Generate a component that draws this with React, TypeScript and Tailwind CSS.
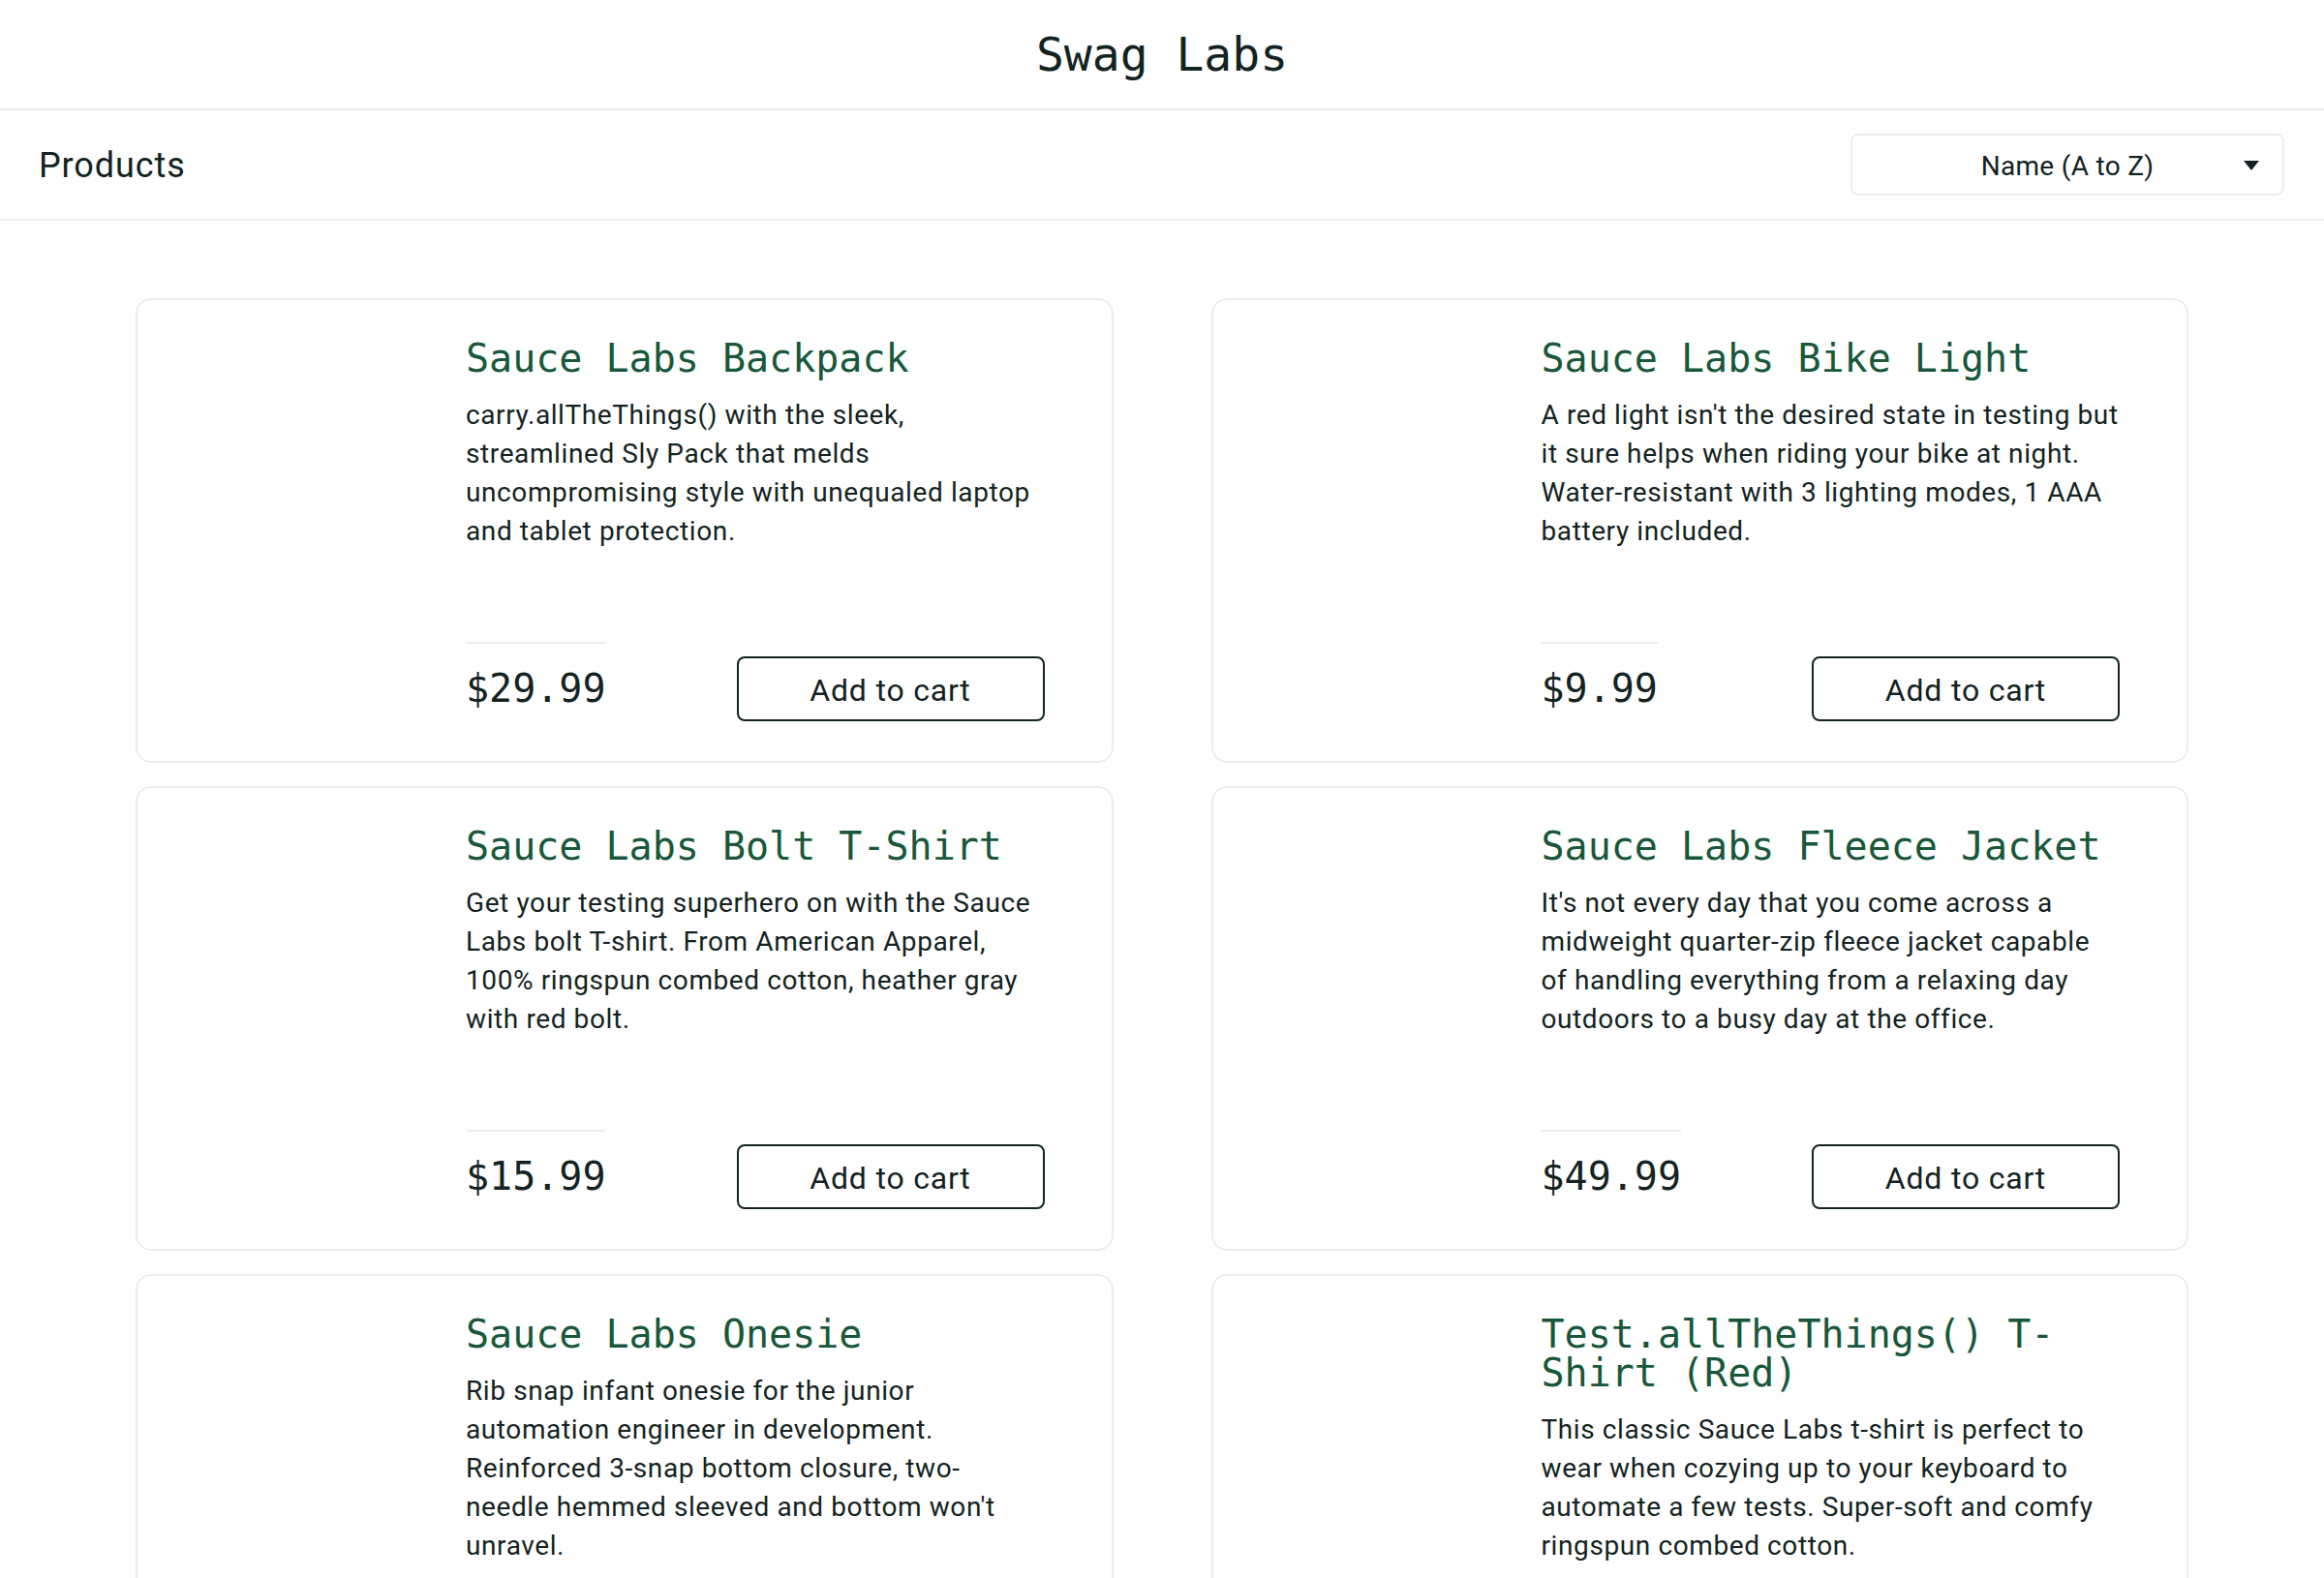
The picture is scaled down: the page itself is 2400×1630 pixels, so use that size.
import React from "react";

type Product = {
  name: string;
  desc: string[];
  price: string;
};

const products: Product[] = [
  {
    name: "Sauce Labs Backpack",
    desc: [
      "carry.allTheThings() with the sleek,",
      "streamlined Sly Pack that melds",
      "uncompromising style with unequaled laptop",
      "and tablet protection.",
    ],
    price: "$29.99",
  },
  {
    name: "Sauce Labs Bike Light",
    desc: [
      "A red light isn't the desired state in testing but",
      "it sure helps when riding your bike at night.",
      "Water-resistant with 3 lighting modes, 1 AAA",
      "battery included.",
    ],
    price: "$9.99",
  },
  {
    name: "Sauce Labs Bolt T-Shirt",
    desc: [
      "Get your testing superhero on with the Sauce",
      "Labs bolt T-shirt. From American Apparel,",
      "100% ringspun combed cotton, heather gray",
      "with red bolt.",
    ],
    price: "$15.99",
  },
  {
    name: "Sauce Labs Fleece Jacket",
    desc: [
      "It's not every day that you come across a",
      "midweight quarter-zip fleece jacket capable",
      "of handling everything from a relaxing day",
      "outdoors to a busy day at the office.",
    ],
    price: "$49.99",
  },
  {
    name: "Sauce Labs Onesie",
    desc: [
      "Rib snap infant onesie for the junior",
      "automation engineer in development.",
      "Reinforced 3-snap bottom closure, two-",
      "needle hemmed sleeved and bottom won't",
      "unravel.",
    ],
    price: "$7.99",
  },
  {
    name: "Test.allTheThings() T-Shirt (Red)",
    desc: [
      "This classic Sauce Labs t-shirt is perfect to",
      "wear when cozying up to your keyboard to",
      "automate a few tests. Super-soft and comfy",
      "ringspun combed cotton.",
    ],
    price: "$15.99",
  },
];

const mono = "font-['DejaVu_Sans_Mono','Liberation_Mono',monospace]";

function ProductCard({ product }: { product: Product }) {
  return (
    <div className="flex min-h-[480px] rounded-[16px] border-2 border-[#ededed] bg-white">
      <div className="w-[339px] shrink-0" />
      <div className="flex flex-1 flex-col justify-between pt-[40px] pb-[41px] pr-[69px]">
        <div>
          <div className={`${mono} text-[40px] leading-[40px] font-medium text-[#18583a]`}>
            {product.name}
          </div>
          <div className="mt-[19px] text-[28px] leading-[40px] tracking-[0.6px] text-[#132322]">
            {product.desc.map((line) => (
              <div key={line} className="whitespace-nowrap">
                {line}
              </div>
            ))}
          </div>
        </div>
        <div className="mt-[40px] flex items-end justify-between">
          <div
            className={`${mono} border-t-2 border-[#ededed] pt-[26px] pb-[14px] text-[40px] leading-[40px] font-medium text-[#132322]`}
          >
            {product.price}
          </div>
          <button
            type="button"
            className="h-[67px] w-[318px] rounded-[8px] border-2 border-[#132322] bg-white pt-[2px] text-[32px] tracking-[0.8px] text-[#132322]"
          >
            Add to cart
          </button>
        </div>
      </div>
    </div>
  );
}

export default function App() {
  return (
    <div className="min-h-screen bg-white font-['Roboto',sans-serif] text-[#132322]">
      <header className="flex h-[114px] items-center justify-center border-b-2 border-[#ededed]">
        <div className={`${mono} text-[48px] leading-[48px]`}>Swag Labs</div>
      </header>

      <div className="flex h-[114px] items-center justify-between border-b-2 border-[#ededed] pl-[40px] pr-[41px]">
        <span className="pt-[2px] text-[36px] tracking-[0.9px]">Products</span>
        <div className="relative flex h-[64px] w-[448px] items-center justify-center rounded-[8px] border-2 border-[#ededed] bg-white">
          <span className="pt-[4px] text-[28px] tracking-[0.3px]">Name (A to Z)</span>
          <svg
            className="absolute right-[24px] top-[26px]"
            width="16"
            height="10"
            viewBox="0 0 16 10"
          >
            <polygon points="0,0 16,0 8,10" fill="#132322" />
          </svg>
        </div>
      </div>

      <main className="grid grid-cols-2 gap-x-[101px] gap-y-[24px] px-[140px] pt-[80px] pb-[80px]">
        {products.map((p) => (
          <ProductCard key={p.name} product={p} />
        ))}
      </main>
    </div>
  );
}
